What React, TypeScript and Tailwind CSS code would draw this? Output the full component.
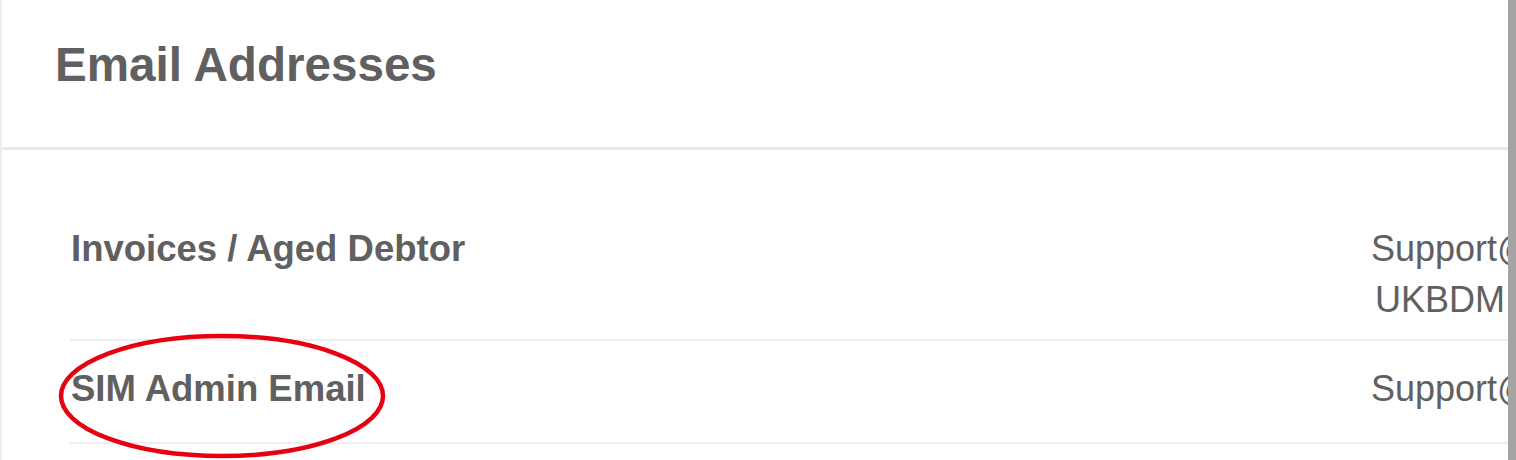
import React from 'react';

const rows = [
    { label: 'Invoices / Aged Debtor', values: ['Support@ukbdm.co.uk;', 'UKBDM Accounts'] },
    { label: 'SIM Admin Email', values: ['Support@ukbdm.co.uk'] },
];

const App: React.FC = () => {
    return (
        <div className="flex h-[460px] w-[1516px] bg-white font-['Liberation_Sans',Arial,sans-serif] text-[#606060] overflow-hidden">
            {/* Panel */}
            <div className="relative w-[1508px] shrink-0 overflow-hidden border-l-2 border-[#ececec]">
                <div className="w-[1800px]">
                    <div className="h-[150px] border-b-[3px] border-[#e6e9ed] pl-[53px] pt-[41px]">
                        <h2 className="text-[47.6px] leading-[47px] font-bold whitespace-nowrap">Email Addresses</h2>
                    </div>

                    <div className="pl-[68px] pt-[73px]">
                        {rows.map((row, i) => (
                            <div
                                key={row.label}
                                className={`flex border-b-2 border-[#eeeeee] ${i === 0 ? 'pb-[14px]' : 'pt-[22px] pb-[28px]'}`}
                            >
                                <div className="w-[1301px] shrink-0 pl-[1px] text-[36.5px] leading-[51px] font-bold whitespace-nowrap">
                                    {row.label}
                                </div>
                                <div className="text-[36px] leading-[51px] whitespace-nowrap">
                                    {row.values.map((v, j) => (
                                        <div key={v} className={j === 1 ? 'pl-[4px]' : ''}>{v}</div>
                                    ))}
                                </div>
                            </div>
                        ))}
                    </div>
                </div>

                {/* annotation */}
                <svg className="absolute left-0 top-0 pointer-events-none" width="1508" height="460">
                    <ellipse cx="220" cy="396" rx="161" ry="60" fill="none" stroke="#e60012" strokeWidth="4.5" />
                </svg>
            </div>

            {/* scrollbar */}
            <div className="w-[8px] shrink-0 bg-[#a4a4a4]" />
        </div>
    );
};

export default App;
